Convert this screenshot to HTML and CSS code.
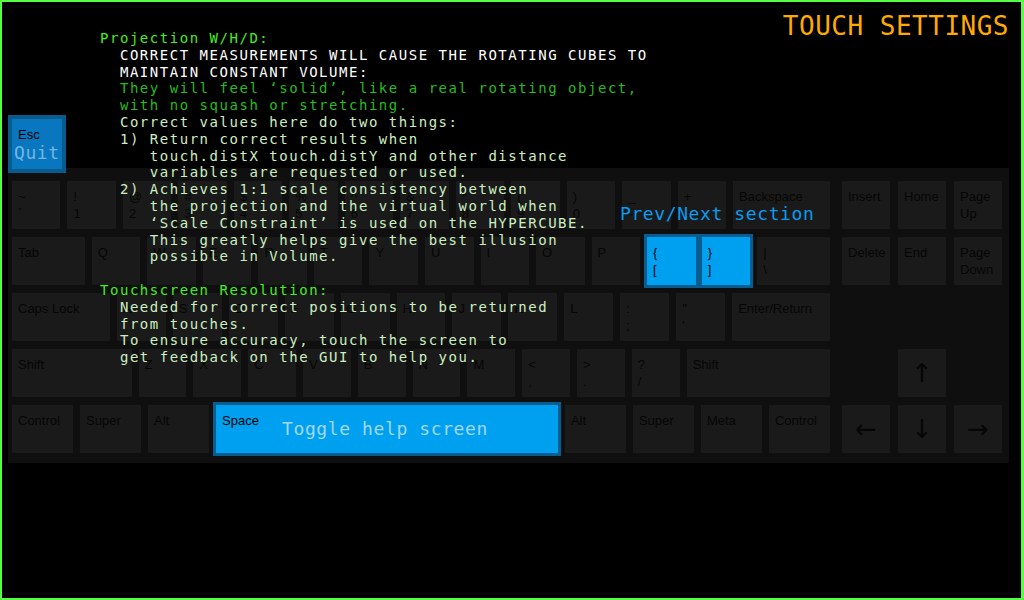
FILE: index.html
```html
<!DOCTYPE html>
<html>
<head>
<meta charset="utf-8">
<link rel="stylesheet" href="styles.css">
</head>
<body>
<div class="screen">
  <header class="header"><h1 class="title">TOUCH SETTINGS</h1></header>

  <div class="keyboard">
    <div class="main">
      <div class="row">
        <div class="key">~
`</div><div class="key">!
1</div><div class="key">@
2</div><div class="key">#
3</div><div class="key">$
4</div><div class="key">%
5</div><div class="key">^
6</div><div class="key">&amp;
7</div><div class="key">*
8</div><div class="key">(
9</div><div class="key">)
0</div><div class="key">_
-</div><div class="key">+
=</div><div class="key w2">Backspace</div>
      </div>
      <div class="row">
        <div class="key w15">Tab</div><div class="key">Q</div><div class="key">W</div><div class="key">E</div><div class="key">R</div><div class="key">T</div><div class="key">Y</div><div class="key">U</div><div class="key">I</div><div class="key">O</div><div class="key">P</div>
        <div class="pair"><div class="key hot">{
[</div><div class="key hot">}
]</div></div>
        <div class="key w15">|
\</div>
      </div>
      <div class="row">
        <div class="key w2">Caps Lock</div><div class="key">A</div><div class="key">S</div><div class="key">D</div><div class="key">F</div><div class="key">G</div><div class="key">H</div><div class="key">J</div><div class="key">K</div><div class="key">L</div><div class="key">:
;</div><div class="key">"
'</div><div class="key w2">Enter/Return</div>
      </div>
      <div class="row">
        <div class="key w25">Shift</div><div class="key">Z</div><div class="key">X</div><div class="key">C</div><div class="key">V</div><div class="key">B</div><div class="key">N</div><div class="key">M</div><div class="key">&lt;
,</div><div class="key">&gt;
.</div><div class="key">?
/</div><div class="key w3">Shift</div>
      </div>
      <div class="row">
        <div class="key mod">Control</div><div class="key mod">Super</div><div class="key mod">Alt</div>
        <div class="key space hot"><span class="space-label">Space</span><span class="toggle">Toggle help screen</span></div>
        <div class="key mod">Alt</div><div class="key mod">Super</div><div class="key mod">Meta</div><div class="key mod">Control</div>
      </div>
    </div>
    <div class="nav">
      <div class="key">Insert</div><div class="key">Home</div><div class="key">Page
Up</div>
      <div class="key">Delete</div><div class="key">End</div><div class="key">Page
Down</div>
      <div class="blank"></div><div class="blank"></div><div class="blank"></div>
      <div class="blank"></div><div class="key arrow">↑</div><div class="blank"></div>
      <div class="key arrow">←</div><div class="key arrow">↓</div><div class="key arrow">→</div>
    </div>
  </div>

  <div class="quit"><div class="quit-label">Esc</div><div class="quit-text">Quit</div></div>

  <div class="prevnext">Prev/Next section</div>

<pre class="help"><span class="h">Projection W/H/D:</span>
<span class="w">  CORRECT MEASUREMENTS WILL CAUSE THE ROTATING CUBES TO
  MAINTAIN CONSTANT VOLUME:</span>
<span class="g">  They will feel ‘solid’, like a real rotating object,
  with no squash or stretching.</span>
  Correct values here do two things:
  1) Return correct results when
     touch.distX touch.distY and other distance
     variables are requested or used.
  2) Achieves 1:1 scale consistency between
     the projection and the virtual world when
     ‘Scale Constraint’ is used on the HYPERCUBE.
     This greatly helps give the best illusion
     possible in Volume.

<span class="h">Touchscreen Resolution:</span>
  Needed for correct positions to be returned
  from touches.
  To ensure accuracy, touch the screen to
  get feedback on the GUI to help you.</pre>
</div>
</body>
</html>
```
FILE: styles.css
```css
html, body {
  margin: 0;
  padding: 0;
  background: #000;
}

.screen {
  position: relative;
  width: 1024px;
  height: 600px;
  box-sizing: border-box;
  border: 2px solid #55ff44;
  border-right-width: 3px;
  background: #000;
  overflow: hidden;
}

.header {
  display: flex;
  justify-content: flex-end;
  height: 30px;
  padding: 9px 12px 0 0;
}

.title {
  margin: 0;
  font: normal 26px/30px "DejaVu Sans Mono", monospace;
  letter-spacing: 0.5px;
  color: #ffaa00;
}

.keyboard {
  display: flex;
  gap: 12px;
  width: 1001px;
  box-sizing: border-box;
  margin: 127px 0 0 6px;
  padding: 13px 7px 10px 4px;
  background: #0f0f0f;
}

.main {
  width: 818px;
  display: flex;
  flex-direction: column;
  gap: 8px;
}

.row {
  display: flex;
  gap: 7px;
  height: 48px;
}

/* padding of 6px is the floor of every key's base size, so each
   basis is 6px times its grow factor to keep widths proportional */
.key {
  flex: 1 1 6px;
  min-width: 0;
  box-sizing: border-box;
  padding: 7px 0 0 6px;
  background: #1a1a1a;
  color: #060606;
  font: 13px/17px "Liberation Sans", Arial, sans-serif;
  white-space: pre;
  overflow: hidden;
}

.w15 { flex: 1.5 1 9px; }
.w2 { flex: 2 1 12px; }
.w25 { flex: 2.5 1 15px; }
.w3 { flex: 3 1 18px; }
.mod { flex: 1.25 1 7.5px; }

.pair {
  flex: 2 1 18px;
  display: flex;
  gap: 6px;
  margin: -3px;
  padding: 3px;
  background: #075c90;
}

.hot {
  background: #00a0f0;
  color: #000;
}

.space {
  flex: 7 1 42px;
  display: grid;
  box-shadow: 0 0 0 3px #075c90;
  overflow: visible;
}

.space-label,
.toggle {
  grid-area: 1 / 1;
}

.space-label {
  align-self: start;
}

.toggle {
  justify-self: center;
  align-self: start;
  margin: 7px 0 0 -10px;
  font: 18px/20px "DejaVu Sans Mono", monospace;
  letter-spacing: 0.6px;
  color: #a2d8f5;
}

.nav {
  display: grid;
  grid-template-columns: repeat(3, 48px);
  grid-auto-rows: 48px;
  gap: 8px;
}

.arrow {
  display: flex;
  align-items: center;
  justify-content: center;
  padding: 0;
  font: 26px/1 "DejaVu Sans", sans-serif;
}

.quit {
  position: absolute;
  left: 6px;
  top: 113px;
  width: 58px;
  height: 58px;
  box-sizing: border-box;
  border: 4px solid #075b8d;
  background: #0877c0;
}

.quit-label {
  padding: 7px 0 0 6px;
  font: 13px/17px "Liberation Sans", Arial, sans-serif;
  color: #000;
}

.quit-text {
  padding-left: 2px;
  margin-top: 1px;
  font: 18px/18px "DejaVu Sans Mono", monospace;
  letter-spacing: 0.6px;
  color: #72b6e0;
}

.prevnext {
  position: absolute;
  left: 618px;
  top: 202px;
  font: 18px/20px "DejaVu Sans Mono", monospace;
  letter-spacing: 0.6px;
  color: #0b9bef;
}

.help {
  position: absolute;
  left: 98px;
  top: 28px;
  margin: 0;
  font: 14px/16.8px "DejaVu Sans Mono", monospace;
  letter-spacing: 1.53px;
  color: #cdeec2;
}

.help .h { color: #44ee22; }
.help .w { color: #ffffff; }
.help .g { color: #26bb1e; }
```
